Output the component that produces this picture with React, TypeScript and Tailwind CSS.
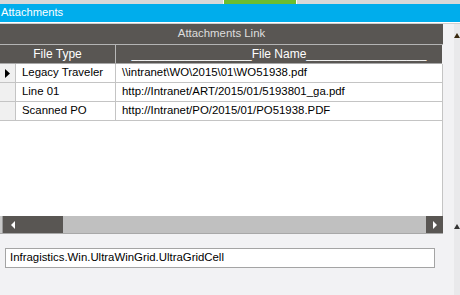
import React from "react";

const rows = [
  { type: "Legacy Traveler", name: "\\\\intranet\\WO\\2015\\01\\WO51938.pdf", active: true },
  { type: "Line 01", name: "http://Intranet/ART/2015/01/5193801_ga.pdf", active: false },
  { type: "Scanned PO", name: "http://Intranet/PO/2015/01/PO51938.PDF", active: false },
];

export default function App() {
  return (
    <div
      className="w-[460px] h-[295px] bg-[#f2f2f4] overflow-hidden flex flex-col text-[11.4px] leading-none"
      style={{ fontFamily: '"Liberation Sans", Arial, sans-serif' }}
    >
      {/* top strip */}
      <div className="h-[4px] flex bg-[#d8d8d8] shrink-0">
        <div className="w-[223px]" />
        <div className="w-[1px] bg-white" />
        <div className="w-[72px] bg-[#6cbd2f]" />
        <div className="w-[1px] bg-white" />
      </div>
      {/* title bar */}
      <div className="h-[18px] bg-[#00adec] text-white flex items-center pl-[1px] text-[11.2px] shrink-0">
        Attachments
      </div>
      <div className="h-[1px] bg-white shrink-0" />
      <div className="h-[1px] bg-[#d0d0d0] shrink-0" />

      <div className="flex shrink-0">
        {/* grid */}
        <div className="w-[443px] flex flex-col h-[210px]">
          <div className="h-[20px] bg-[#595653] text-[#dedede] flex items-center justify-center text-[11.4px] shrink-0">
            Attachments Link
          </div>
          <div className="h-[1px] bg-[#b4b4b4] shrink-0" />
          <div className="h-[19px] flex bg-[#595653] text-white text-[12px] shrink-0 w-[442px] border-b border-[#a8a8a8]">
            <div className="w-[116px] border-r border-[#b8b8b8] flex items-center justify-center">File Type</div>
            <div className="flex-1 flex items-center justify-center whitespace-pre">
              __________________File Name__________________
            </div>
          </div>
          <div className="flex-1 bg-white w-[443px] border-r border-[#c4c4c4] flex flex-col">
            {rows.map((r) => (
              <div key={r.type} className="h-[19px] flex border-b border-[#c4c4c4] text-black text-[11.4px]">
                <div className="w-[16px] bg-[#f0f0f0] border-r border-[#c4c4c4] flex items-center justify-center">
                  {r.active && (
                    <svg width="5" height="9" viewBox="0 0 5 9">
                      <path d="M0 0 L5 4.5 L0 9 Z" fill="#000" />
                    </svg>
                  )}
                </div>
                <div className="w-[100px] border-r border-[#c4c4c4] flex items-center pl-[6px]">{r.type}</div>
                <div className="flex-1 flex items-center pl-[6px] whitespace-pre">{r.name}</div>
              </div>
            ))}
          </div>
          {/* horizontal scrollbar */}
          <div className="h-[18px] flex bg-[#c0c0c0] border-b border-[#a8a8a8] shrink-0">
            <div className="w-[2px] bg-[#c8c8c8]" />
            <div className="w-[1px] bg-[#9a9a9a]" />
            <div className="w-[60px] bg-[#595653] flex items-center pl-[8px]">
              <svg width="4" height="8" viewBox="0 0 4 8">
                <path d="M4 0 L0 4 L4 8 Z" fill="#fff" />
              </svg>
            </div>
            <div className="flex-1" />
            <div className="w-[17px] bg-[#595653] flex items-center justify-center">
              <svg width="4" height="8" viewBox="0 0 4 8">
                <path d="M0 0 L4 4 L0 8 Z" fill="#fff" />
              </svg>
            </div>
          </div>
        </div>
        {/* right strip */}
        <div className="flex-1 flex">
          <div className="w-[11px]" />
          <div className="flex-1 bg-[#e9e9eb] flex flex-col items-center justify-between pt-[9px] pb-[5px]">
            <svg width="6" height="5" viewBox="0 0 6 5">
              <path d="M0 5 L3 0 L6 5 Z" fill="#3a2a10" />
            </svg>
            <svg width="6" height="5" viewBox="0 0 6 5">
              <path d="M0 5 L3 0 L6 5 Z" fill="#333" />
            </svg>
          </div>
        </div>
      </div>

      <div className="flex-1 flex">
        <div className="w-[454px] pt-[14px] pl-[5px]">
          <div className="w-[430px] h-[20px] bg-white border border-[#a4a4a4] flex items-center pl-[4px] text-[11.4px] text-black">
            Infragistics.Win.UltraWinGrid.UltraGridCell
          </div>
        </div>
        <div className="flex-1 bg-[#e9e9eb]" />
      </div>
    </div>
  );
}
